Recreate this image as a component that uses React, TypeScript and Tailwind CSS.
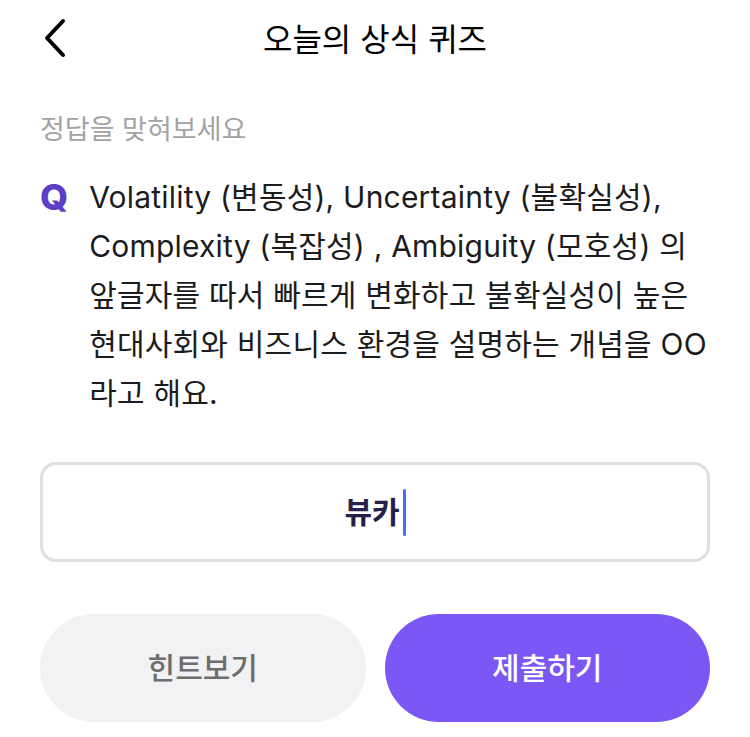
const questionLines = [
  'Volatility (변동성), Uncertainty (불확실성),',
  'Complexity (복잡성) , Ambiguity (모호성) 의',
  '앞글자를 따서 빠르게 변화하고 불확실성이 높은',
  '현대사회와 비즈니스 환경을 설명하는 개념을 OO',
  '라고 해요.',
];

export default function App() {
  return (
    <div
      className="flex min-h-[737px] w-[750px] flex-col bg-white px-10"
      style={{ fontFamily: 'Inter, "Noto Sans CJK KR", sans-serif' }}
    >
      <header className="relative flex h-[80px] items-center justify-center">
        <button type="button" className="absolute left-[2px] top-[18px] h-10 w-8" aria-label="뒤로">
          <svg viewBox="0 0 24 40" className="h-10 w-6" fill="none" stroke="#000" strokeWidth="4" strokeLinecap="round" strokeLinejoin="round">
            <path d="M21 3 L5 20 L21 37" />
          </svg>
        </button>
        <h1 className="text-[32px] font-normal text-black">오늘의 상식 퀴즈</h1>
      </header>

      <p className="mt-[31px] text-[27px] leading-[38px] text-[#a3a3a3]">정답을 맞혀보세요</p>

      <div className="mt-[24px] flex gap-[21px]">
        <span className="text-[36px] font-extrabold leading-[49px] text-[#5b3fc6]">Q</span>
        <p className="text-[30px] leading-[49px] tracking-[0.2px] text-[#1c1c1e] [word-break:keep-all]">
          {questionLines.map((line) => (
            <span key={line} className="block whitespace-nowrap">
              {line}
            </span>
          ))}
        </p>
      </div>

      <div className="mt-[44px] flex h-[100px] items-center justify-center rounded-[16px] border-[3px] border-[#e0e0e0]">
        <span className="text-[30px] font-bold text-[#25214a]">뷰카</span>
        <span className="ml-[3px] h-[47px] w-[3px] rounded-full bg-[#4a6cf0]" />
      </div>

      <div className="mt-[52px] flex gap-[19px]">
        <button type="button" className="h-[108px] flex-1 rounded-full bg-[#f2f2f4] text-[30px] font-medium text-[#6e6e6e]">
          힌트보기
        </button>
        <button type="button" className="h-[108px] flex-1 rounded-full bg-[#7b57f5] text-[30px] font-medium text-white">
          제출하기
        </button>
      </div>
    </div>
  );
}
